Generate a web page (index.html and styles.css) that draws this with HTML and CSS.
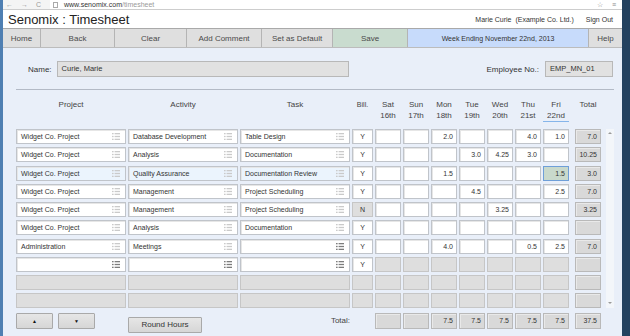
FILE: index.html
```html
<!DOCTYPE html>
<html lang="en">
<head>
    <meta charset="UTF-8">
    <meta name="viewport" content="width=device-width, initial-scale=1.0">
    <title>Senomix : Timesheet</title>
    <link rel="stylesheet" href="styles.css">
</head>
<body>
<svg width="0" height="0" class="defs">
    <symbol id="li" viewBox="0 0 8 7">
        <rect x="0" y="0" width="1.6" height="1.3"/><rect x="2.6" y="0" width="5.4" height="1.3"/>
        <rect x="0" y="2.85" width="1.6" height="1.3"/><rect x="2.6" y="2.85" width="5.4" height="1.3"/>
        <rect x="0" y="5.7" width="1.6" height="1.3"/><rect x="2.6" y="5.7" width="5.4" height="1.3"/>
    </symbol>
</svg>
<div class="window">
    <div class="browser">
        <div class="navs"><span>&#8592;</span><span>&#8594;</span><span>C</span></div>
        <div class="url"><span class="page"></span><span class="host">www.senomix.com</span><span class="path">/timesheet</span></div>
        <div class="tools"><span>&#9734;</span><span>&#8801;</span></div>
    </div>

    <div class="titlebar">
        <h1>Senomix : Timesheet</h1>
        <div class="user"><span>Marie Curie&nbsp;&nbsp;(Example Co. Ltd.)</span><span>Sign Out</span></div>
    </div>

    <div class="toolbar">
        <div class="tb w-home">Home</div>
        <div class="tb w-back">Back</div>
        <div class="tb w-clear">Clear</div>
        <div class="tb w-comment">Add Comment</div>
        <div class="tb w-default">Set as Default</div>
        <div class="tb w-save">Save</div>
        <div class="tb w-week">Week Ending November 22nd, 2013</div>
        <div class="tb w-help">Help</div>
    </div>

    <div class="main">
        <div class="namerow">
            <div class="group">
                <label class="name-label">Name:</label>
                <div class="ro name-box">Curie, Marie</div>
            </div>
            <div class="group">
                <label>Employee No.:</label>
                <div class="ro emp-box">EMP_MN_01</div>
            </div>
        </div>
        <div class="rule"></div>

        <div class="sheet head">
            <div>Project</div>
            <div>Activity</div>
            <div>Task</div>
            <div class="bill-h">Bill.</div>
            <div>Sat<br>16th</div>
            <div>Sun<br>17th</div>
            <div>Mon<br>18th</div>
            <div>Tue<br>19th</div>
            <div>Wed<br>20th</div>
            <div>Thu<br>21st</div>
            <div class="today"><span>Fri<br>22nd</span></div>
            <div class="tot">Total</div>
        </div>

        <div class="body">
            <div class="sheet rows">
                <!-- row 1 -->
                <div class="f"><span>Widget Co. Project</span><svg class="li"><use href="#li"/></svg></div>
                <div class="f"><span>Database Development</span><svg class="li"><use href="#li"/></svg></div>
                <div class="f"><span>Table Design</span><svg class="li"><use href="#li"/></svg></div>
                <div class="c b">Y</div>
                <div class="c"></div><div class="c"></div><div class="c">2.0</div><div class="c"></div>
                <div class="c"></div><div class="c">4.0</div><div class="c">1.0</div>
                <div class="c t">7.0</div>
                <!-- row 2 -->
                <div class="f"><span>Widget Co. Project</span><svg class="li"><use href="#li"/></svg></div>
                <div class="f"><span>Analysis</span><svg class="li"><use href="#li"/></svg></div>
                <div class="f"><span>Documentation</span><svg class="li"><use href="#li"/></svg></div>
                <div class="c b">Y</div>
                <div class="c"></div><div class="c"></div><div class="c"></div><div class="c">3.0</div>
                <div class="c">4.25</div><div class="c">3.0</div><div class="c"></div>
                <div class="c t">10.25</div>
                <!-- row 3, selected -->
                <div class="f sel"><span>Widget Co. Project</span><svg class="li"><use href="#li"/></svg></div>
                <div class="f sel"><span>Quality Assurance</span><svg class="li"><use href="#li"/></svg></div>
                <div class="f sel"><span>Documentation Review</span><svg class="li"><use href="#li"/></svg></div>
                <div class="c b">Y</div>
                <div class="c"></div><div class="c"></div><div class="c">1.5</div><div class="c"></div>
                <div class="c"></div><div class="c"></div><div class="c focus">1.5</div>
                <div class="c t">3.0</div>
                <!-- row 4 -->
                <div class="f"><span>Widget Co. Project</span><svg class="li"><use href="#li"/></svg></div>
                <div class="f"><span>Management</span><svg class="li"><use href="#li"/></svg></div>
                <div class="f"><span>Project Scheduling</span><svg class="li"><use href="#li"/></svg></div>
                <div class="c b">Y</div>
                <div class="c"></div><div class="c"></div><div class="c"></div><div class="c">4.5</div>
                <div class="c"></div><div class="c"></div><div class="c">2.5</div>
                <div class="c t">7.0</div>
                <!-- row 5 -->
                <div class="f"><span>Widget Co. Project</span><svg class="li"><use href="#li"/></svg></div>
                <div class="f"><span>Management</span><svg class="li"><use href="#li"/></svg></div>
                <div class="f"><span>Project Scheduling</span><svg class="li"><use href="#li"/></svg></div>
                <div class="c b g">N</div>
                <div class="c"></div><div class="c"></div><div class="c"></div><div class="c"></div>
                <div class="c">3.25</div><div class="c"></div><div class="c"></div>
                <div class="c t">3.25</div>
                <!-- row 6 -->
                <div class="f"><span>Widget Co. Project</span><svg class="li"><use href="#li"/></svg></div>
                <div class="f"><span>Analysis</span><svg class="li"><use href="#li"/></svg></div>
                <div class="f"><span>Documentation</span><svg class="li"><use href="#li"/></svg></div>
                <div class="c b">Y</div>
                <div class="c"></div><div class="c"></div><div class="c"></div><div class="c"></div>
                <div class="c"></div><div class="c"></div><div class="c"></div>
                <div class="c t"></div>
                <!-- row 7 -->
                <div class="f"><span>Administration</span><svg class="li"><use href="#li"/></svg></div>
                <div class="f"><span>Meetings</span><svg class="li"><use href="#li"/></svg></div>
                <div class="f"><span></span><svg class="li dark"><use href="#li"/></svg></div>
                <div class="c b">Y</div>
                <div class="c"></div><div class="c"></div><div class="c">4.0</div><div class="c"></div>
                <div class="c"></div><div class="c">0.5</div><div class="c">2.5</div>
                <div class="c t">7.0</div>
                <!-- row 8, new entry -->
                <div class="f"><span></span><svg class="li dark"><use href="#li"/></svg></div>
                <div class="f"><span></span><svg class="li dark"><use href="#li"/></svg></div>
                <div class="f"><span></span><svg class="li dark"><use href="#li"/></svg></div>
                <div class="c b">Y</div>
                <div class="c g"></div><div class="c g"></div><div class="c g"></div><div class="c g"></div>
                <div class="c g"></div><div class="c g"></div><div class="c g"></div>
                <div class="c t"></div>
                <!-- row 9 -->
                <div class="c g"></div><div class="c g"></div><div class="c g"></div><div class="c g"></div>
                <div class="c g"></div><div class="c g"></div><div class="c g"></div><div class="c g"></div>
                <div class="c g"></div><div class="c g"></div><div class="c g"></div>
                <div class="c t"></div>
                <!-- row 10 -->
                <div class="c g"></div><div class="c g"></div><div class="c g"></div><div class="c g"></div>
                <div class="c g"></div><div class="c g"></div><div class="c g"></div><div class="c g"></div>
                <div class="c g"></div><div class="c g"></div><div class="c g"></div>
                <div class="c t"></div>
            </div>
            <div class="scrollbar"><span class="up"></span><span class="down"></span></div>
        </div>

        <div class="sheet foot">
            <div class="arrows"><button class="btn arrow">&#9650;</button><button class="btn arrow">&#9660;</button></div>
            <div><button class="btn round">Round Hours</button></div>
            <div class="total-label">Total:</div>
            <div></div>
            <div class="c t"></div><div class="c t"></div><div class="c t">7.5</div><div class="c t">7.5</div>
            <div class="c t">7.5</div><div class="c t">7.5</div><div class="c t">7.5</div>
            <div class="c t">37.5</div>
        </div>
    </div>
</div>
</body>
</html>
```

FILE: styles.css
```css
* {
    box-sizing: border-box;
}
body {
    margin: 0;
    background: linear-gradient(to right, #4f7fb2 0, #4f7fb2 3px, #24425f 3px);
    font-family: "Liberation Sans", Arial, sans-serif;
    color: #333;
}
.defs {
    position: absolute;
}
.window {
    margin-left: 3px;
    width: 619px;
    height: 336px;
    background: #e9eff9;
    overflow: hidden;
}

/* browser chrome strip */
.browser {
    height: 10px;
    display: flex;
    background: #f4f4f4;
    border-bottom: 1px solid #cdcdcd;
    font-size: 7px;
    line-height: 9px;
    color: #9a9a9a;
}
.navs {
    display: flex;
    gap: 8px;
    width: 47px;
    padding-left: 3px;
}
.url {
    flex: 1;
    background: #fff;
    padding-left: 3px;
    display: flex;
    align-items: center;
}
.page {
    width: 5px;
    height: 6px;
    border: 1px solid #aaa;
    margin-right: 6px;
}
.host {
    color: #333;
}
.tools {
    display: flex;
    gap: 9px;
    padding: 0 6px 0 8px;
    background: #fff;
    color: #888;
}

.titlebar {
    height: 18px;
    background: #fff;
    display: flex;
    align-items: center;
    justify-content: space-between;
    padding: 0 9px 0 5px;
}
.titlebar h1 {
    margin: 0;
    font-size: 13px;
    font-weight: normal;
    color: #222;
}
.user {
    display: flex;
    gap: 12px;
    font-size: 7px;
    color: #333;
}

.toolbar {
    display: flex;
    height: 20px;
    background: #dfdfdf;
    border-top: 1px solid #a9a9a9;
    border-bottom: 1px solid #bcbcbc;
}
.tb {
    flex: none;
    display: flex;
    align-items: center;
    justify-content: center;
    font-size: 8px;
    color: #4a4a4a;
    border-right: 1px solid #b4b4b4;
}
.w-home { width: 38px; }
.w-back { width: 74px; }
.w-clear { width: 72px; }
.w-comment { width: 75px; }
.w-default { width: 71px; }
.w-save { width: 75px; background: #c9dccf; }
.w-week { width: 181px; background: #c7dbfb; font-size: 7px; color: #333; }
.w-help { width: 33px; border-right: none; }

.main {
    padding: 13px 8px 0 13px;
}
.namerow {
    display: flex;
    justify-content: space-between;
    padding-right: 1px;
}
.group {
    display: flex;
    align-items: center;
    gap: 6px;
    font-size: 8px;
    color: #333;
}
.name-label {
    margin-left: 12px;
    margin-right: -1px;
}
.ro {
    height: 16px;
    background: #e1e1e1;
    border: 1px solid #b8b8b8;
    font-size: 7.5px;
    line-height: 14px;
    padding-left: 4px;
    color: #333;
}
.name-box { width: 292px; }
.emp-box { width: 68px; }
.rule {
    margin-top: 12px;
    border-top: 1px solid #b3bac6;
}

.sheet {
    display: grid;
    grid-template-columns: 110px 110px 110px 21px repeat(7, 26px) 30px;
    column-gap: 2px;
}
.head {
    height: 39px;
    padding-top: 9px;
    align-items: start;
    text-align: center;
    font-size: 8px;
    line-height: 11px;
    color: #444;
}
.head .bill-h {
    font-size: 7px;
}
.head .tot {
    margin-left: 4px;
}
.today span {
    display: inline-block;
    width: 26px;
    border-bottom: 1.5px solid #86b5ea;
}

.body {
    display: flex;
}
.rows {
    grid-auto-rows: 15px;
    row-gap: 3.25px;
}
.f {
    display: flex;
    align-items: center;
    justify-content: space-between;
    background: #fff;
    border: 1px solid #c0c4ca;
    box-shadow: inset 1px 1px 0 #e6e6e6;
    padding: 0 5px 0 4px;
    font-size: 7px;
    color: #333;
    white-space: nowrap;
}
.f.sel {
    background: #ebf4fd;
}
.li {
    width: 8px;
    height: 7px;
    flex: none;
    fill: #cacaca;
}
.li.dark {
    fill: #7d7d7d;
}
.c {
    background: #fff;
    border: 1px solid #c0c4ca;
    box-shadow: inset 1px 1px 0 #e6e6e6;
    font-size: 7px;
    line-height: 13px;
    text-align: right;
    padding-right: 3px;
    color: #333;
}
.c.b {
    text-align: center;
    padding: 0;
}
.c.g {
    background: #dedede;
    border-color: #c6c6c6;
    box-shadow: none;
}
.c.t {
    margin-left: 4px;
    background: #d9d9d9;
    border-color: #b9b9b9;
    box-shadow: inset 1px 1px 0 #e9e9e9;
}
.c.focus {
    background: #c9d9cc;
    border-color: #6f9fd8;
    box-shadow: none;
}
.scrollbar {
    width: 10px;
    margin-left: 5px;
    background: #f3f6fa;
    display: flex;
    flex-direction: column;
    justify-content: space-between;
    align-items: center;
    padding: 3px 0 4px;
}
.up, .down {
    width: 0;
    height: 0;
    border-left: 2px solid transparent;
    border-right: 2px solid transparent;
}
.up { border-bottom: 2px solid #9a9a9a; }
.down { border-top: 2px solid #9a9a9a; }

.foot {
    margin-top: 5px;
    grid-template-rows: 16px;
}
.arrows {
    display: flex;
    gap: 5px;
}
.btn {
    height: 16px;
    padding: 0;
    background: linear-gradient(#e6e6e6, #d6d6d6);
    border: 1px solid #a9a9a9;
    border-radius: 1px;
    font-family: inherit;
    color: #333;
}
.arrow {
    width: 37px;
    font-size: 5px;
    color: #111;
}
.round {
    width: 74px;
    font-size: 8px;
}
.total-label {
    text-align: right;
    font-size: 8px;
    line-height: 16px;
    color: #444;
}
.foot .c.t {
    margin-left: 0;
}
.foot .c.t:last-child {
    margin-left: 4px;
}
```
